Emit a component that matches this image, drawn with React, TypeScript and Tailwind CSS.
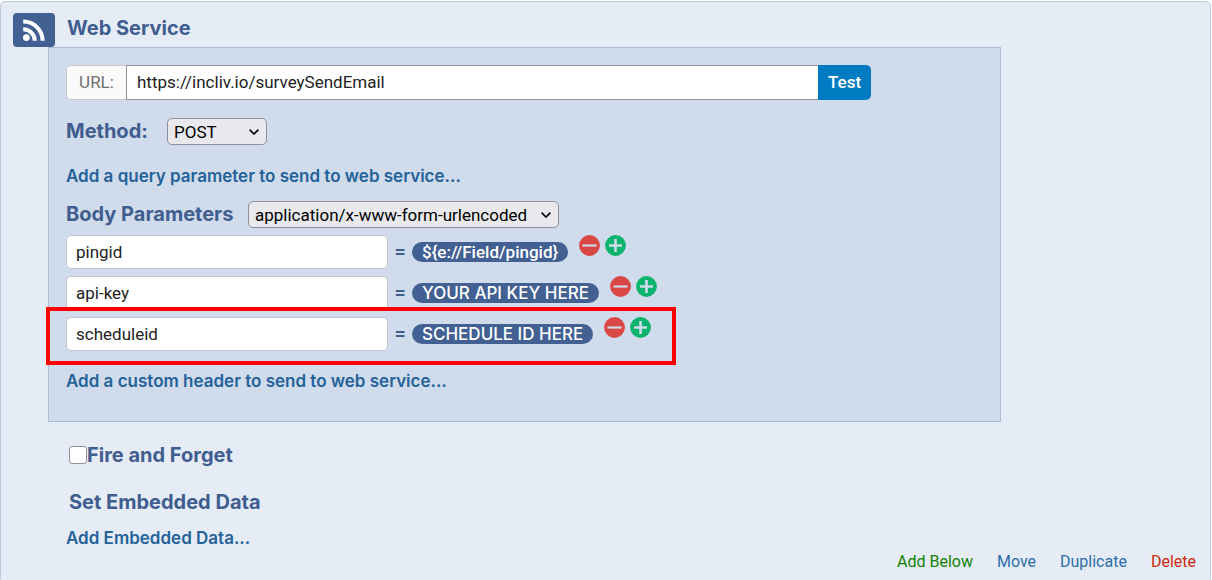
import { ReactNode } from "react";

const HEADING = "font-[Inter,sans-serif] text-xl leading-7 font-bold text-[#405d8f]";
const LINK = "font-[Inter,sans-serif] text-[17px] leading-6 font-semibold text-[#24629a] hover:underline";

type Param = { name: string; value: string; highlighted?: boolean };

const PARAMS: Param[] = [
  { name: "pingid", value: "${e://Field/pingid}" },
  { name: "api-key", value: "YOUR API KEY HERE" },
  { name: "scheduleid", value: "SCHEDULE ID HERE", highlighted: true },
];

function FeedIcon() {
  return (
    <svg viewBox="0 0 24 24" className="h-6 w-6" fill="none" stroke="white" strokeWidth="4" aria-hidden="true">
      <circle cx="4.4" cy="19.6" r="3.4" fill="white" stroke="none" />
      <path d="M1.2 11.2a11.6 11.6 0 0 1 11.6 11.6" />
      <path d="M1.2 3.6a19.2 19.2 0 0 1 19.4 19.2" />
    </svg>
  );
}

function RoundButton({ kind, label }: { kind: "remove" | "add"; label: string }) {
  return (
    <button type="button" aria-label={label} className="block h-[21px] w-[21px]">
      <svg viewBox="0 0 21 21" className="h-full w-full" aria-hidden="true">
        <circle cx="10.5" cy="10.5" r="10.4" fill={kind === "add" ? "#0bb46c" : "#d94844"} />
        <path
          d={kind === "add" ? "M4 10.5h13M10.5 4v13" : "M3.5 10.5h14"}
          stroke="#d0dbeb"
          strokeWidth={kind === "add" ? 2.6 : 2.2}
        />
      </svg>
    </button>
  );
}

function Select({ id, className, children }: { id: string; className: string; children: ReactNode }) {
  return (
    <span className={`relative inline-flex ${className}`}>
      <select
        id={id}
        className="h-[27px] w-full appearance-none rounded-[5px] border border-[#8f8f9d] bg-[#e9e9ed] pr-6 pl-[6px] text-[17px] leading-5 text-black"
      >
        {children}
      </select>
      <svg
        viewBox="0 0 10 6"
        className="pointer-events-none absolute top-[11px] right-2 h-[6px] w-[10px]"
        fill="none"
        stroke="black"
        strokeWidth="1.6"
        aria-hidden="true"
      >
        <path d="M0.6 0.6 5 5 9.4 0.6" />
      </svg>
    </span>
  );
}

function ParamRow({ name, value, highlighted }: Param) {
  const piped = value.startsWith("${");
  return (
    <li className="relative flex items-center">
      <input
        aria-label={`Parameter name ${name}`}
        defaultValue={name}
        className="h-[34px] w-[322px] rounded-[5px] border border-[#c2c6cc] bg-white px-[9px] text-[17px] text-[#222]"
      />
      <span className="w-6 text-center text-xl leading-5 font-medium text-[#405d8f]">=</span>
      <button
        type="button"
        className={`h-5 rounded-full bg-[#426092] px-[10px] text-[17px] leading-5 font-medium text-white ${
          piped ? "font-[Roboto,sans-serif]" : "font-[Inter,sans-serif]"
        }`}
      >
        {value}
      </button>
      <div className="mb-[13px] ml-[11px] flex gap-[5px]">
        <RoundButton kind="remove" label={`Remove ${name}`} />
        <RoundButton kind="add" label={`Add after ${name}`} />
      </div>
      {highlighted && (
        <span className="pointer-events-none absolute -top-[10px] -left-5 h-[58px] w-[630px] border-4 border-[#fe0000]" />
      )}
    </li>
  );
}

export default function App() {
  return (
    <main className="bg-white pt-px pr-px font-[Roboto,sans-serif]">
      <section className="rounded-[5px] border border-[#bccadd] bg-[#e5ecf6] pb-2">
        <header className="flex items-center pt-[11px] pl-3">
          <span className="flex h-[34px] w-[42px] items-center justify-center rounded bg-[#426092]">
            <FeedIcon />
          </span>
          <h1 className={`ml-3 pb-1 ${HEADING}`}>Web Service</h1>
        </header>

        <div className="mr-[209px] ml-[47px] border border-[#abbdd6] bg-[#d0dbeb] pt-[17px] pb-[27px] pl-[17px]">
          <div className="mr-[129px] flex h-[35px]">
            <label
              htmlFor="url"
              className="flex w-[60px] items-center justify-center rounded-l-[5px] border border-r-0 border-[#c9c9c9] bg-[#fafafa] text-[17px] text-[#707070]"
            >
              URL:
            </label>
            <input
              id="url"
              defaultValue="https://incliv.io/surveySendEmail"
              className="min-w-0 flex-1 border border-r-0 border-[#8e9299] bg-white px-[10px] text-[17px] text-[#222]"
            />
            <button type="button" className="w-[53px] rounded-r-[5px] bg-[#007ac0] text-[17px] font-medium text-white">
              Test
            </button>
          </div>

          <div className="mt-[17px] flex items-end">
            <label htmlFor="method" className={`w-[101px] ${HEADING}`}>
              Method:
            </label>
            <Select id="method" className="w-[100px]">
              <option>POST</option>
              <option>GET</option>
            </Select>
          </div>

          <div className="mt-[19px]">
            <a href="#query" className={LINK}>
              Add a query parameter to send to web service...
            </a>
          </div>

          <div className="mt-[11px] flex items-end">
            <label htmlFor="body-type" className={`w-[182px] ${HEADING}`}>
              Body Parameters
            </label>
            <Select id="body-type" className="w-[311px]">
              <option>application/x-www-form-urlencoded</option>
              <option>application/json</option>
            </Select>
          </div>

          <ul className="mt-[7px] flex flex-col gap-[7px]">
            {PARAMS.map((param) => (
              <ParamRow key={param.name} {...param} />
            ))}
          </ul>

          <div className="mt-[18px]">
            <a href="#header" className={LINK}>
              Add a custom header to send to web service...
            </a>
          </div>
        </div>

        <div className="pt-[19px] pl-[65px]">
          <label className={`flex items-center pl-[3px] ${HEADING}`}>
            <input
              type="checkbox"
              className="h-[18px] w-[18px] appearance-none rounded-[3px] border border-[#8f8f9d] bg-white checked:bg-[#007ac0]"
            />
            Fire and Forget
          </label>
          <h2 className={`mt-[19px] pl-[3px] ${HEADING}`}>Set Embedded Data</h2>
          <div className="mt-[10px]">
            <a href="#embedded" className={LINK}>
              Add Embedded Data...
            </a>
          </div>
        </div>

        <nav className="-mt-px flex justify-end gap-6 pr-[14px] text-base leading-6 text-[#2c6ca9]">
          <a href="#add" className="text-[#128004]">
            Add Below
          </a>
          <a href="#move">Move</a>
          <a href="#duplicate">Duplicate</a>
          <a href="#delete" className="text-[#cd2a0b]">
            Delete
          </a>
        </nav>
      </section>
    </main>
  );
}
